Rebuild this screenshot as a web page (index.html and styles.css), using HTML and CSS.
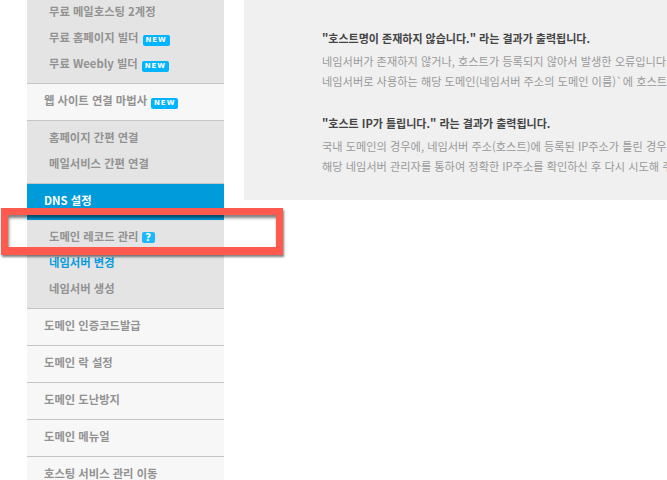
FILE: index.html
```html
<!DOCTYPE html>
<html lang="ko">

<head>
  <meta charset="UTF-8">
  <meta name="viewport" content="width=device-width, initial-scale=1.0">
  <title>DNS 설정</title>
  <link rel="stylesheet" href="styles.css">
</head>

<body>
  <div class="page">
    <ul class="side-menu">
      <li class="sub-list sub-first">
        <a class="sub-item">무료 메일호스팅 2계정</a>
        <a class="sub-item">무료 홈페이지 빌더 <span class="new-badge">NEW</span></a>
        <a class="sub-item">무료 Weebly 빌더 <span class="new-badge">NEW</span></a>
      </li>
      <li class="menu-item">웹 사이트 연결 마법사 <span class="new-badge">NEW</span></li>
      <li class="sub-list">
        <a class="sub-item">홈페이지 간편 연결</a>
        <a class="sub-item">메일서비스 간편 연결</a>
      </li>
      <li class="menu-item active">DNS 설정</li>
      <li class="sub-list">
        <a class="sub-item">도메인 레코드 관리 <span class="help-badge">?</span></a>
        <a class="sub-item current">네임서버 변경</a>
        <a class="sub-item">네임서버 생성</a>
      </li>
      <li class="menu-item">도메인 인증코드발급</li>
      <li class="menu-item">도메인 락 설정</li>
      <li class="menu-item">도메인 도난방지</li>
      <li class="menu-item">도메인 메뉴얼</li>
      <li class="menu-item">호스팅 서비스 관리 이동</li>
    </ul>

    <div class="content-box">
      <p class="result-text top-line">네임서버 변경 후 결과가 출력되지 않는 경우에는 잠시 후 다시 확인해 주시기 바랍니다.</p>
      <h4 class="result-title">"호스트명이 존재하지 않습니다." 라는 결과가 출력됩니다.</h4>
      <p class="result-text">네임서버가 존재하지 않거나, 호스트가 등록되지 않아서 발생한 오류입니다.<br>네임서버로 사용하는 해당 도메인(네임서버 주소의 도메인 이름)`에 호스트를 등록해 주세요.</p>
      <h4 class="result-title">"호스트 IP가 틀립니다." 라는 결과가 출력됩니다.</h4>
      <p class="result-text">국내 도메인의 경우에, 네임서버 주소(호스트)에 등록된 IP주소가 틀린 경우입니다.<br>해당 네임서버 관리자를 통하여 정확한 IP주소를 확인하신 후 다시 시도해 주세요.</p>
    </div>
  </div>

  <div class="highlight"></div>
</body>

</html>
```

FILE: styles.css
```css
* {
  box-sizing: border-box;
}

html,
body {
  height: 480px;
  overflow: hidden;
}

body {
  margin: 0;
  background-color: #fff;
  font-family: "Noto Sans CJK KR", "Noto Sans", sans-serif;
  font-size: 11.3px;
  color: #929292;
}

.page {
  display: flex;
  align-items: flex-start;
  gap: 20px;
  padding-left: 27px;
  height: 480px;
  overflow: hidden;
}

.side-menu {
  flex: none;
  width: 197px;
  margin: -8px 0 0;
  padding: 0;
  list-style: none;
}

.menu-item {
  height: 37px;
  padding-left: 17px;
  line-height: 33px;
  font-weight: 700;
  background-color: #f7f7f7;
  border-bottom: 1px solid #c4c4c4;
}

.menu-item.active {
  height: 36px;
  line-height: 33px;
  color: #fff;
  background-color: #009bdb;
  border-bottom: 0;
}

.sub-list {
  padding: 3px 0 7px;
  background-color: #e4e4e4;
  border-bottom: 1px solid #c4c4c4;
}

.sub-first {
  padding-top: 6px;
}

.sub-item {
  display: block;
  height: 26px;
  padding-left: 22px;
  line-height: 26px;
  font-weight: 700;
}

.sub-item.current {
  color: #0a9be0;
}

.new-badge {
  display: inline-block;
  width: 27px;
  height: 11px;
  margin-left: 1px;
  font-family: "DejaVu Sans", sans-serif;
  font-size: 7px;
  font-weight: 700;
  letter-spacing: 1px;
  line-height: 11px;
  text-align: center;
  color: #fff;
  background-color: #00b4ff;
  border-radius: 2px;
  vertical-align: 0;
}

.help-badge {
  display: inline-block;
  width: 13px;
  height: 11px;
  font-family: "DejaVu Sans", sans-serif;
  font-size: 10px;
  font-weight: 700;
  line-height: 11px;
  text-align: center;
  color: #fff;
  background-color: #1cb8ff;
  border-radius: 2px;
  vertical-align: 0;
}

.content-box {
  flex: 1;
  min-width: 0;
  height: 200px;
  padding-left: 78px;
  background-color: #f0f0f0;
  white-space: nowrap;
  overflow: hidden;
}

.result-title {
  margin: 0 0 4px;
  font-size: 11px;
  line-height: 18px;
  font-weight: 700;
  color: #444;
}

.result-text {
  margin: 0 0 23px;
  font-size: 11.2px;
  line-height: 20px;
  color: #999;
}

.top-line {
  margin-top: -16px;
  margin-bottom: 25px;
}

.highlight {
  position: absolute;
  left: 1px;
  top: 208px;
  width: 282px;
  height: 47px;
  border: solid #ff5a4d;
  border-width: 7px 7px 8px;
  box-shadow: 1px 2px 2px rgba(0, 0, 0, 0.5), inset 1px 3px 3px rgba(0, 0, 0, 0.5);
}
```
